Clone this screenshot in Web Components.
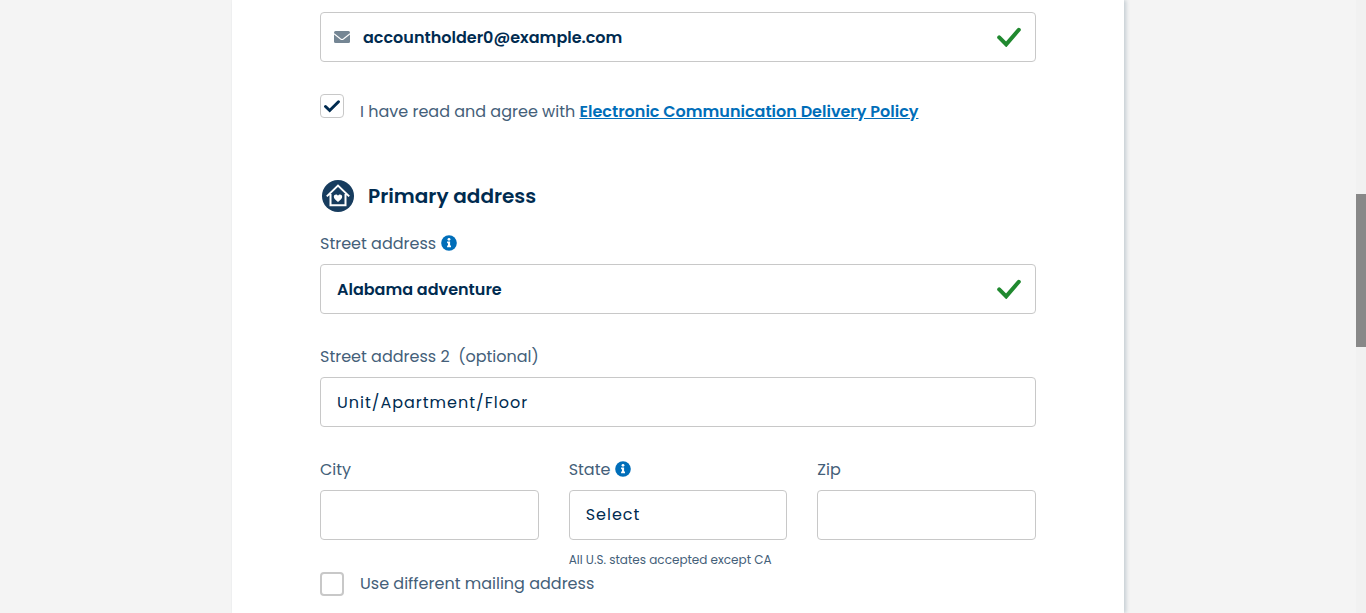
<!DOCTYPE html>
<html lang="en">
<head>
<meta charset="utf-8">
<meta name="viewport" content="width=device-width, initial-scale=1">
<title>Account details</title>
<style>
  html, body { margin: 0; }
  body {
    --navy: #002b50;
    --label: #446079;
    --blue: #006eb9;
    --border: #c8c8c8;
    font-family: Poppins, Inter, "Open Sans", sans-serif;
    font-size: 16px;
    line-height: 24px;
    color: var(--label);
    background: #f4f4f4;
  }
  a { color: var(--blue); font-weight: 600; text-decoration: underline; }
</style>
</head>
<body>
<app-shell>
  <form-card>
    <text-field type="email" value="accountholder0@example.com" name="Email" icon="mail" valid></text-field>
    <check-field class="consent" checked>I have read and agree with <a href="#policy">Electronic Communication Delivery Policy</a></check-field>
    <section-title>Primary address</section-title>
    <field-stack>
      <text-field label="Street address" value="Alabama adventure" info valid></text-field>
      <text-field label="Street address 2 &nbsp;(optional)" placeholder="Unit/Apartment/Floor"></text-field>
      <field-row>
        <text-field label="City"></text-field>
        <select-field label="State" info hint="All U.S. states accepted except CA"></select-field>
        <text-field label="Zip"></text-field>
      </field-row>
    </field-stack>
    <check-field class="mailing">Use different mailing address</check-field>
  </form-card>
  <scroll-rail slot="rail"></scroll-rail>
</app-shell>

<script>
  const define = (name, html, setup) => {
    const template = document.createElement('template');
    template.innerHTML = html;
    customElements.define(name, class extends HTMLElement {
      constructor() {
        super();
        this.attachShadow({ mode: 'open' }).append(template.content.cloneNode(true));
      }
      connectedCallback() { if (setup) setup(this, this.shadowRoot); }
    });
  };

  define('app-shell', `
    <style>
      :host { display: flex; min-height: 100vh; }
      main { flex: 1; display: flex; justify-content: center; min-width: 0; }
    </style>
    <main><slot></slot></main><slot name="rail"></slot>`);

  define('scroll-rail', `
    <style>
      :host { display: grid; grid-template-rows: 194fr 153fr 266fr; width: 10px; height: 100vh; position: sticky; top: 0; background: #f1f1f1; }
      div { grid-row: 2; background: #888; }
    </style>
    <div></div>`);

  define('form-card', `
    <style>
      :host { display: block; box-sizing: border-box; width: 100%; max-width: 892px; padding: 12px 88px 16px; background: #fff; box-shadow: 2px 0 4px #c3ccd2; clip-path: inset(0 -8px 0 -1px); }
      ::slotted(.consent) { margin-top: 32px; }
      ::slotted(section-title) { margin-top: 50px; }
      ::slotted(field-stack) { margin-top: 20px; }
      ::slotted(.mailing) { margin-top: 2px; }
    </style>
    <slot></slot>`);

  define('section-title', `
    <style>
      :host { display: block; }
      h2 { display: flex; align-items: center; gap: 14px; margin: 0; padding-left: 2px; font-size: 20px; line-height: 32px; font-weight: 600; color: var(--navy); }
      svg { width: 32px; height: 32px; flex: none; }
    </style>
    <h2>
      <svg viewBox="0 0 32 32" aria-hidden="true">
        <circle cx="16" cy="16" r="16" fill="#173c5e"/>
        <path d="M4.800 16.400 16 5.600l11.200 10.800M8.500 14v11.300h15V14" fill="none" stroke="#fff" stroke-width="2"/>
        <path d="M16 21.900c-2.500-1.900-4.200-3.200-4.200-5.100 0-2.700 3.200-3.200 4.200-1.100 1-2.100 4.200-1.600 4.200 1.100 0 1.900-1.700 3.200-4.200 5.100z" fill="#fff"/>
      </svg>
      <slot></slot>
    </h2>`);

  define('field-stack', `
    <style>:host { display: flex; flex-direction: column; gap: 31px; }</style><slot></slot>`);

  define('field-row', `
    <style>:host { display: grid; grid-template-columns: repeat(3, minmax(0, 1fr)); gap: 30px; align-items: start; }</style><slot></slot>`);

  define('info-button', `
    <style>
      :host { display: inline-flex; }
      button { display: flex; margin: 0; padding: 0 0 2px; border: 0; background: none; cursor: pointer; }
      svg { width: 16px; height: 16px; }
    </style>
    <button type="button" aria-label="More information">
      <svg viewBox="0 0 16 16" aria-hidden="true">
        <circle cx="8" cy="8" r="7.800" fill="#006eb9"/>
        <circle cx="8" cy="4.300" r="1.400" fill="#fff"/>
        <path d="M6.100 6.600h3v4h.9v1.600H6.100v-1.600H7V8.200h-.9z" fill="#fff"/>
      </svg>
    </button>`);

  const fieldStyles = `
    <style>
      :host { display: block; min-width: 0; }
      .caption { display: flex; align-items: center; gap: 5px; margin-bottom: 8px; }
      .box { display: flex; align-items: center; box-sizing: border-box; height: 50px; padding: 0 14px 0 16px; border: 1px solid var(--border); border-radius: 4px; background: #fff; }
      .mail { width: 16px; height: 12px; flex: none; margin: 0 13px 0 -3px; }
      .tick { width: 24px; height: 20px; flex: none; }
      input, select { flex: 1; min-width: 0; width: 100%; height: 100%; margin: 0; padding: 0; border: 0; outline: 0; background: none; font: inherit; color: var(--navy); appearance: none; }
      input { font-weight: 600; }
      input::placeholder { font-weight: 400; color: var(--navy); opacity: 1; }
      input::placeholder, select { letter-spacing: 1px; }
      .hint { margin: 10px 0 0; font-size: 12px; line-height: 20px; white-space: nowrap; }
      [hidden] { display: none; }
    </style>`;

  const setupField = (host, root) => {
    const label = host.getAttribute('label');
    root.querySelector('.caption').hidden = !label;
    root.querySelector('label').textContent = label || '';
    root.querySelector('info-button').hidden = !host.hasAttribute('info');
  };

  define('text-field', fieldStyles + `
    <div class="caption"><label for="control"></label><info-button></info-button></div>
    <div class="box">
      <svg class="mail" viewBox="0 0 16 12" aria-hidden="true">
        <rect width="16" height="12" rx="1.500" fill="#758694"/>
        <path d="M0 2.800 6.600 8q1.400 1 2.800 0L16 2.800" fill="none" stroke="#fff" stroke-width="1.100"/>
      </svg>
      <input id="control">
      <svg class="tick" viewBox="0 0 24 20" aria-hidden="true">
        <path d="M2.200 10.400 9.200 17.400 21.800 2.800" fill="none" stroke="#20892f" stroke-width="4" stroke-linecap="round"/>
      </svg>
    </div>`, (host, root) => {
      setupField(host, root);
      const input = root.querySelector('input');
      input.type = host.getAttribute('type') || 'text';
      input.value = host.getAttribute('value') || '';
      input.placeholder = host.getAttribute('placeholder') || '';
      if (host.hasAttribute('name')) input.setAttribute('aria-label', host.getAttribute('name'));
      if (!host.hasAttribute('icon')) root.querySelector('.mail').remove();
      if (!host.hasAttribute('valid')) root.querySelector('.tick').remove();
    });

  define('select-field', fieldStyles + `
    <div class="caption"><label for="control"></label><info-button></info-button></div>
    <div class="box"><select id="control"><option>Select</option></select></div>
    <p class="hint"></p>`, (host, root) => {
      setupField(host, root);
      root.querySelector('.hint').textContent = host.getAttribute('hint') || '';
    });

  define('check-field', `
    <style>
      :host { display: flex; gap: 16px; align-items: flex-start; }
      input { appearance: none; box-sizing: border-box; flex: none; width: 24px; height: 24px; margin: 0; border: 2px solid var(--border); border-radius: 4px; background: #fff; }
      input:checked { border-width: 1px; background: #fff url("data:image/svg+xml,%3Csvg xmlns='http://www.w3.org/2000/svg' viewBox='0 0 22 22'%3E%3Cpath d='M4.500 11.500 8.700 15.500 17.500 6.800' fill='none' stroke='%23002b50' stroke-width='3' stroke-linecap='round'/%3E%3C/svg%3E") center / 22px 22px; }
      label { line-height: 24px; }
      :host([checked]) label { line-height: 36px; }
    </style>
    <input type="checkbox" id="control"><label for="control"><slot></slot></label>`,
    (host, root) => { root.querySelector('input').checked = host.hasAttribute('checked'); });
</script>
</body>
</html>
